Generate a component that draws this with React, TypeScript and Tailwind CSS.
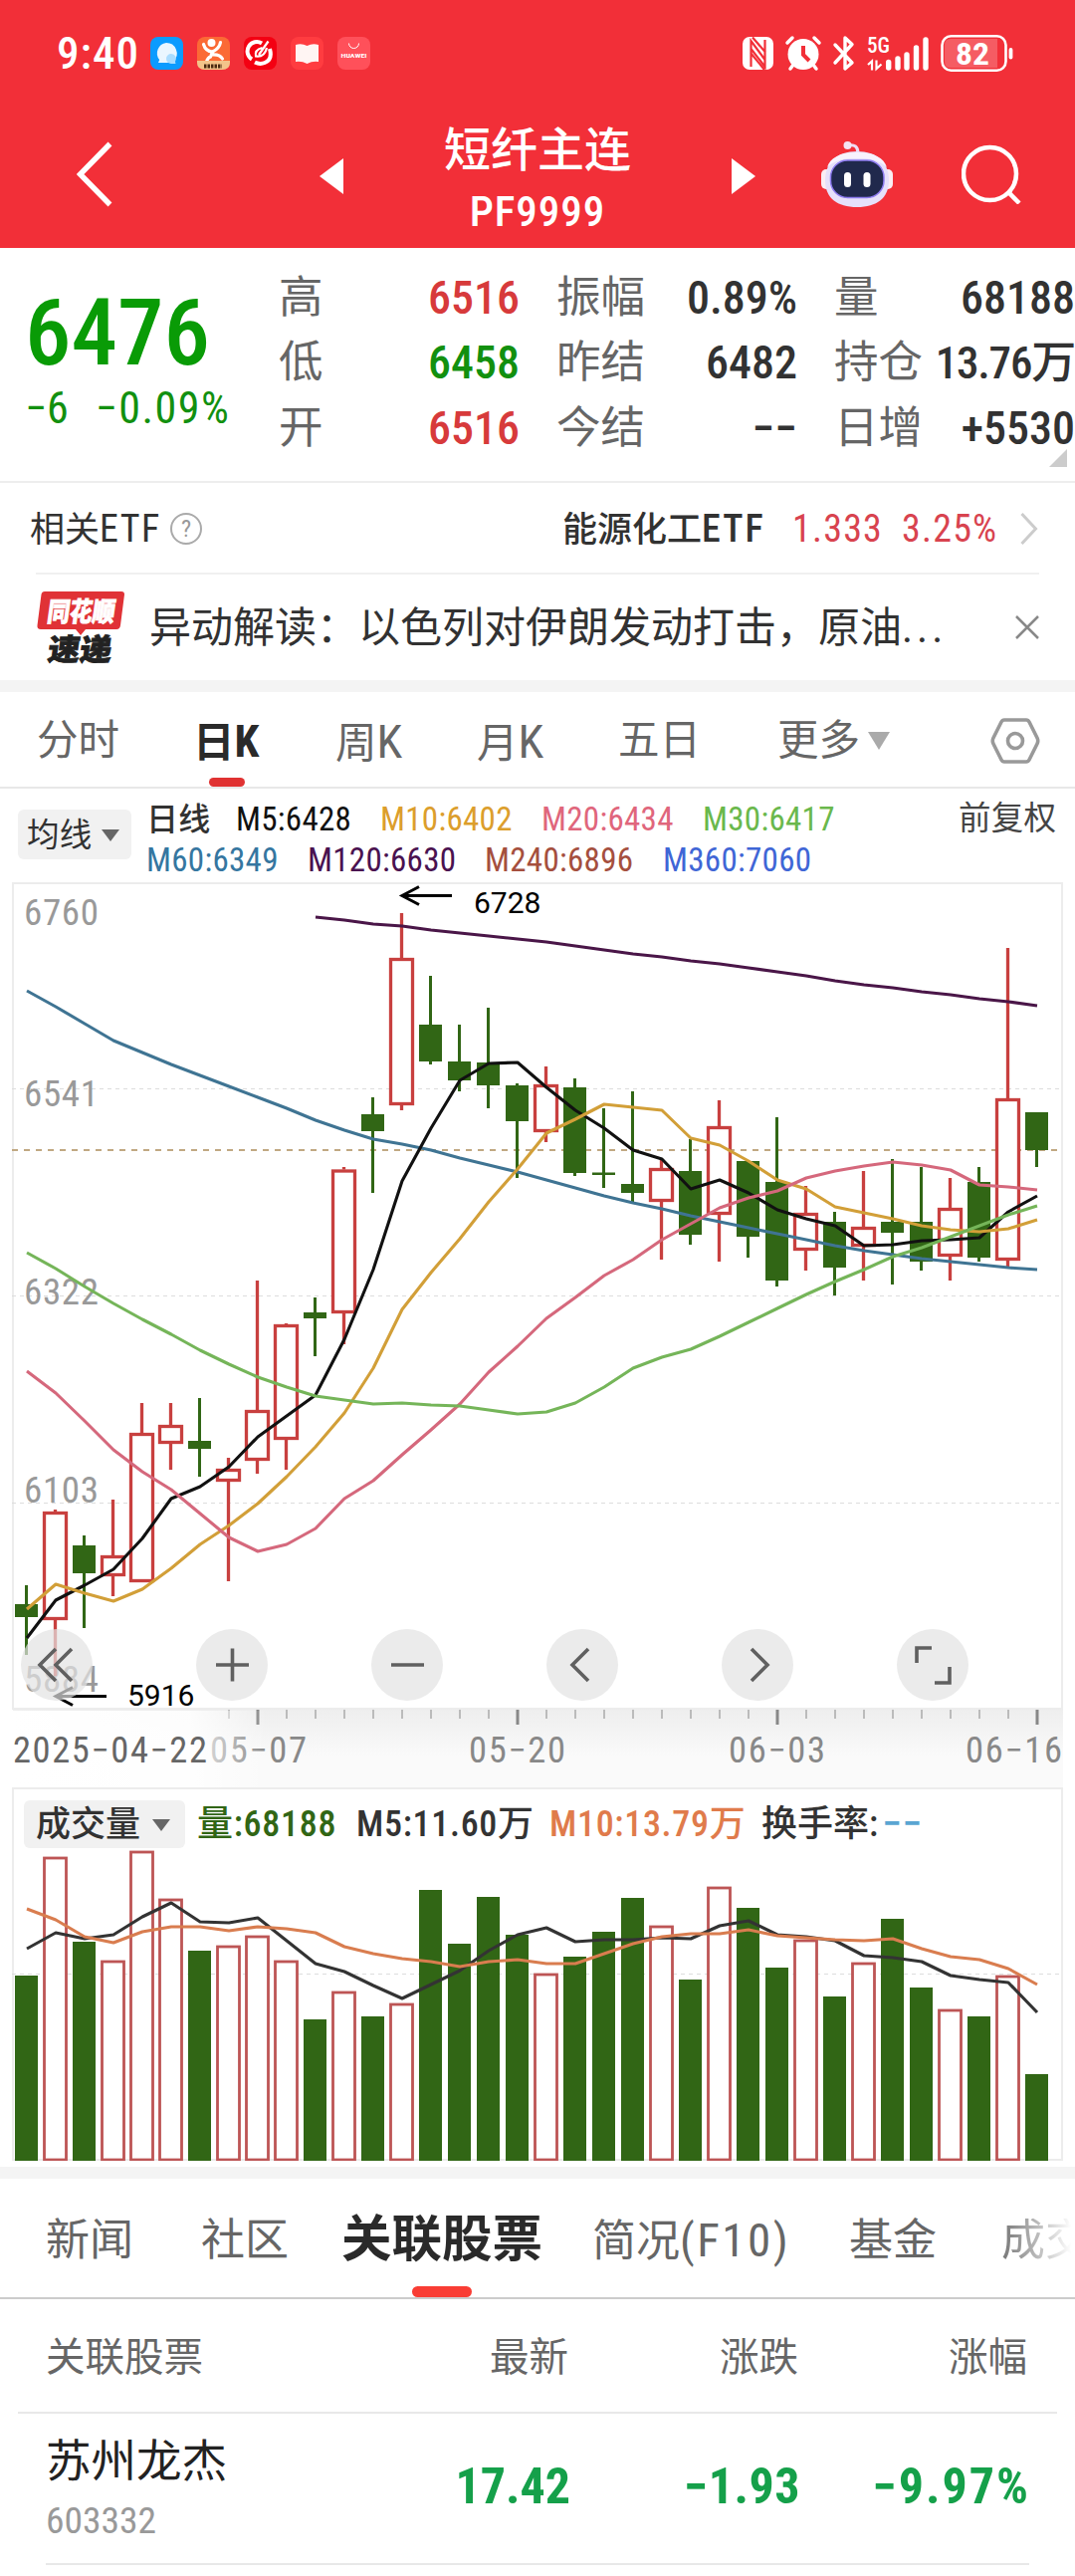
import clsx from 'clsx';
import { ReactNode } from 'react';

// [up, high, body top, body bottom, low]
const candles: [number, number, number, number, number][] = [
  [0, 1592, 1611, 1624, 1662], [1, 1516, 1518, 1627, 1683], [0, 1542, 1552, 1580, 1635], [1, 1506, 1562, 1583, 1603],
  [1, 1409, 1439, 1589, 1589], [1, 1409, 1431, 1450, 1476], [0, 1404, 1447, 1455, 1483], [1, 1464, 1475, 1488, 1588],
  [1, 1286, 1416, 1467, 1480], [1, 1329, 1330, 1446, 1476], [0, 1303, 1318, 1324, 1362], [1, 1172, 1174.5, 1319, 1350],
  [0, 1102, 1119, 1136, 1198], [1, 917, 962, 1110, 1115], [0, 980, 1029, 1066, 1069], [0, 1029, 1066, 1085, 1096],
  [0, 1012, 1067, 1090, 1113], [0, 1088, 1090, 1126, 1183], [1, 1071, 1089, 1137, 1147], [0, 1083, 1092, 1178, 1181],
  [0, 1113, 1177.5, 1180, 1193], [0, 1096, 1189, 1198, 1207], [1, 1164, 1173, 1207, 1265], [0, 1144, 1176, 1240, 1250],
  [1, 1105, 1131, 1220, 1267], [0, 1166, 1166, 1242, 1263], [0, 1122, 1187, 1286, 1292], [1, 1191, 1218, 1256, 1276],
  [0, 1217, 1227, 1273, 1301], [1, 1176, 1232, 1252, 1286], [0, 1164, 1227, 1238, 1290], [0, 1172, 1227, 1267, 1276],
  [1, 1183, 1213, 1262, 1286], [0, 1172, 1187, 1263, 1267], [1, 952, 1103, 1266, 1272], [0, 1117, 1117, 1155, 1172],
];

const averages = [
  { color: '#3f7493', start: 0, ys: [995, 1011, 1028, 1045, 1057, 1069, 1080, 1091, 1102, 1113, 1125, 1135, 1144, 1149, 1155, 1163, 1170, 1177, 1185, 1193, 1201, 1208, 1214, 1221, 1227, 1233, 1239, 1245, 1251, 1256, 1260, 1264, 1267, 1270, 1273, 1275] },
  { color: '#4a1648', start: 10, ys: [921, 924, 928, 930, 934, 937, 940, 943, 946, 950, 954, 958, 961, 965, 968, 972, 976, 980, 985, 989, 992, 996, 999, 1003, 1006, 1010] },
  { color: '#111111', start: 0, ys: [1645, 1607, 1592, 1576, 1545, 1505, 1493, 1473, 1443, 1422, 1401, 1345, 1275, 1186, 1133, 1085, 1068, 1067, 1092, 1115, 1133, 1155, 1164, 1194, 1185, 1198, 1215, 1224, 1231, 1251, 1250, 1246, 1245, 1243, 1217, 1201] },
  { color: '#d29f38', start: 0, ys: [1616, 1591, 1600, 1608, 1596, 1575, 1551, 1532, 1510, 1483, 1453, 1419, 1374, 1315, 1278, 1244, 1207, 1174, 1138, 1124, 1109, 1112, 1115, 1143, 1150, 1166, 1185, 1194, 1212, 1218, 1224, 1231, 1235, 1237, 1234, 1225] },
  { color: '#d5687c', start: 0, ys: [1377, 1399, 1427, 1456, 1478, 1496, 1520, 1544, 1558, 1551, 1535, 1505, 1487, 1461, 1436, 1410, 1378, 1352, 1324, 1303, 1281, 1265, 1245, 1229, 1213, 1203, 1196, 1183, 1176, 1171, 1167, 1170, 1175, 1190, 1192, 1195] },
  { color: '#75b559', start: 0, ys: [1258, 1274, 1292, 1309, 1325, 1340, 1356, 1370, 1383, 1393, 1402, 1406, 1410, 1409, 1411, 1412, 1416, 1420, 1418, 1409, 1393, 1374, 1363, 1355, 1342, 1328, 1314, 1300, 1287, 1275, 1262, 1253, 1242, 1231, 1220, 1211] },
];

const volumes = [
  1984, 1866, 1950, 1970, 1860, 1908, 1959, 1955, 1945, 1970, 2028, 2001, 2025, 2013, 1898, 1952, 1905, 1943,
  1983, 1965, 1940, 1906, 1935, 1988, 1896, 1916, 1976, 1949, 2005, 1972, 1927, 1996, 2019, 2025, 1985, 2083,
];

const volumeAverages = [
  { color: '#333333', start: 0, ys: [1957, 1941, 1947, 1943, 1925, 1911, 1930, 1931, 1926, 1949, 1972, 1980, 1994, 2007, 1993, 1979, 1959, 1943, 1936, 1950, 1948, 1948, 1946, 1947, 1934, 1929, 1943, 1945, 1949, 1964, 1966, 1970, 1984, 1988, 1991, 2021] },
  { color: '#d97d4f', start: 0, ys: [1917, 1928, 1945, 1951, 1940, 1935, 1935, 1939, 1935, 1937, 1941, 1955, 1962, 1967, 1970, 1975, 1970, 1968, 1972, 1972, 1962, 1952, 1945, 1942, 1942, 1938, 1944, 1946, 1948, 1949, 1947, 1957, 1965, 1968, 1977, 1993] },
];

const quotes = [
  [['高', '6516', 'text-[#d73a3b]'], ['低', '6458', 'text-[#12900f]'], ['开', '6516', 'text-[#d73a3b]']],
  [['振幅', '0.89%', 'text-[#323232]'], ['昨结', '6482', 'text-[#323232]'], ['今结', '−−', 'text-[#323232]']],
  [['量', '68188', 'text-[#323232]'], ['持仓', '13.76万', 'text-[#323232] text-[45px] tracking-[-1.2px]'], ['日增', '+5530', 'text-[#323232]']],
];

const px = (i: number) => 26.5 + i * 29;

function Lines({ series }: { series: { color: string; start: number; ys: number[] }[] }) {
  return (
    <>
      {series.map((s) => (
        <polyline
          key={s.color}
          points={s.ys.map((y, i) => `${px(i + s.start) + 0.5},${y}`).join(' ')}
          fill="none"
          stroke={s.color}
          strokeWidth="3.100"
          strokeLinejoin="round"
        />
      ))}
    </>
  );
}

function StatusBar() {
  return (
    <div className="flex h-[107px] items-center pl-[57px] text-white">
      <div className="w-[94px] text-[45px] leading-none font-medium tracking-[1px]">9:40</div>
      <div className="flex gap-[14px]">
        <svg className="size-[33px]" viewBox="0 0 33 33">
          <rect width="33" height="33" rx="8" fill="#0b9bff" />
          <path d="M16 6a10.5 10.5 0 0 1 7.500 18 10.500 10.500 0 0 1-7 2H8l1.200-3A10.500 10.500 0 0 1 16 6z" fill="#eaf6ff" />
          <path d="M21 17a5 5 0 0 1 4 8l.5 2H21a5 5 0 0 1 0-10z" fill="#a9dcff" />
        </svg>
        <svg className="size-[33px]" viewBox="0 0 33 33">
          <rect width="33" height="33" rx="8" fill="#fb6a35" />
          <circle cx="14.500" cy="6" r="4" fill="#fff" />
          <path d="M6.500 7.500q2 7 9 7.500M23.500 5.500q-1 6-8 9.500l-2 5q-3 1-4 5M14.500 18q8-1 11 4" stroke="#fff" strokeWidth="3.200" fill="none" strokeLinecap="round" />
          <path d="M0 24h33v2q0 7-8 7H8q-8 0-8-7z" fill="#f3c48a" />
          <path d="M7 29.500h18" stroke="#4a2a12" strokeWidth="4" strokeDasharray="2.500 1" />
        </svg>
        <svg className="size-[33px]" viewBox="0 0 33 33">
          <rect width="33" height="33" rx="8" fill="#f40012" />
          <path d="M18 6.500a8.500 8.500 0 0 0-10 16M26 12q3 11-5 14-5 2-10-.5" stroke="#fff" strokeWidth="4" fill="none" />
          <path d="M24.500 4.500 15 18M18.500 11q-8 2-6.500 8.500 9 1 11-8.500" stroke="#fff" strokeWidth="2.200" fill="none" />
        </svg>
        <svg className="size-[33px]" viewBox="0 0 33 33">
          <rect width="33" height="33" rx="8" fill="#ff3c40" />
          <path d="M5 8q6-2 11.500 1Q22 6 28 8v17q-6-1-11.500 2Q11 24 5 25z" fill="#fff5f3" />
        </svg>
        <svg className="size-[33px]" viewBox="0 0 33 33">
          <rect width="33" height="33" rx="8" fill="#ff505a" />
          <path d="M11.500 6.500a5 5 0 0 0 10 0" stroke="#fff" strokeWidth="1" fill="none" />
          <text x="16.500" y="21" textAnchor="middle" textLength="26" lengthAdjust="spacingAndGlyphs" fontSize="6" fontWeight="700" fill="#fff">HUAWEI</text>
        </svg>
      </div>
      <svg className="ml-[374px] h-[37px] w-[273px] overflow-visible" viewBox="746 35 273 37" fill="none" stroke="#fff">
        <rect x="746" y="37" width="31" height="33" rx="7" fill="#fff" stroke="none" />
        <path d="M754.500 67V41l14 19M768.500 40v27l-14-18M756 37.500l13 15M754 53l14 17" stroke="#f22f38" strokeWidth="2.200" />
        <circle cx="807" cy="54.500" r="15.500" fill="#fff" stroke="none" />
        <path d="M807 46v9l6 6" stroke="#f22f38" strokeWidth="4" />
        <path d="m791 43 5-5M823 43l-5-5M797 65l-3 4M817 65l3 4" strokeWidth="3.500" strokeLinecap="round" />
        <path d="m839 45 17 18-7 6V38l7 6.500L839 63" strokeWidth="3.400" strokeLinejoin="round" strokeLinecap="round" />
        <path d="M892.700 62.500v5.500M902 59v9M911 55v13M920.500 48v20M930 40v28" strokeWidth="5.400" strokeLinecap="round" />
        <path d="m872 65 4-3.500v9M880.500 60.500V69l5-4.500" strokeWidth="2.200" />
        <text x="871" y="53" textLength="23" lengthAdjust="spacingAndGlyphs" fontSize="22" fontWeight="500" fill="#fff" stroke="none">5G</text>
        <rect x="946.500" y="36.300" width="64" height="34.500" rx="9" strokeWidth="2.600" />
        <path d="M949 45q0-6 6-6h47v29h-47q-6 0-6-6z" fill="#fff" fillOpacity=".22" stroke="none" />
        <path d="M1015.500 50v7.500" strokeWidth="3.800" strokeLinecap="round" />
        <text x="960" y="64.500" textLength="34" lengthAdjust="spacingAndGlyphs" fontSize="32" fontWeight="700" fill="#fff" stroke="none">82</text>
      </svg>
    </div>
  );
}

function Header() {
  return (
    <header className="h-[249px] bg-[#f22f38]">
      <StatusBar />
      <div className="flex h-[136px] items-center pl-[77px] text-white">
        <svg className="h-[66px] w-9" viewBox="0 0 36 66">
          <path d="M33.500 2.500 3.500 33l30 30.500" fill="none" stroke="#fff" strokeWidth="5.500" />
        </svg>
        <svg className="mt-1 ml-[208px] h-9 w-6" viewBox="0 0 24 36"><path d="M24 0v36L0 18z" fill="#fff" /></svg>
        <div className="mx-[101px] flex w-[188px] flex-col items-center gap-[17px] pt-[10px] leading-none font-medium whitespace-nowrap">
          <div className="text-[47px]">短纤主连</div>
          <div className="text-[43px] tracking-[1px]">PF9999</div>
        </div>
        <svg className="mt-1 h-9 w-6" viewBox="0 0 24 36"><path d="M0 0v36l24-18z" fill="#fff" /></svg>
        <svg className="ml-[65px] h-[68px] w-[74px]" viewBox="824 140 74 68">
          <path d="M852 145q10-2 10 8" stroke="#eedcf4" strokeWidth="3" fill="none" />
          <circle cx="851.500" cy="145" r="4" fill="#f5e4f4" />
          <rect x="825" y="169" width="12" height="20" rx="5" fill="#fbeef4" />
          <rect x="885" y="169" width="12" height="20" rx="5" fill="#fbeef4" />
          <path d="M861 151c20 0 32 11 32 29s-12 27-32 27-32-9-32-27 12-29 32-29z" fill="#e6e0fa" />
          <path d="M861 152c18 0 27 6 30 15-9-8-17-9-30-9s-21 1-30 9c3-9 12-15 30-15z" fill="#f8f2fd" />
          <rect x="834.500" y="160" width="53.500" height="37.500" rx="17" fill="#20294c" stroke="#8e7cf0" strokeWidth="1.500" />
          <rect x="848" y="172" width="7" height="15" rx="3.500" fill="#fff" />
          <rect x="867.500" y="172" width="7" height="15" rx="3.500" fill="#fff" />
        </svg>
        <svg className="ml-[68px] size-[60px]" viewBox="0 0 60 60" fill="none" stroke="#fff" strokeWidth="4.500">
          <circle cx="28.500" cy="29.500" r="26.500" />
          <path d="m47 48 11 11" />
        </svg>
      </div>
    </header>
  );
}

function Quote() {
  return (
    <section className="relative flex h-[236px] border-b-2 border-[#ededed] leading-none font-medium whitespace-nowrap">
      <div className="w-[281px] pl-[25px] text-[#099b06]">
        <div className="mt-[39px] text-[93px]">6476</div>
        <div className="mt-[7px] flex gap-[27px] text-[44px] font-[450] text-[#12900f]">
          <span>−6</span>
          <span className="tracking-[1.500px]">−0.09%</span>
        </div>
      </div>
      <div className="flex gap-[37px] pt-[17px]">
        {quotes.map((col, i) => (
          <div key={i} className="w-[242px]">
            {col.map(([label, value, color]) => (
              <div key={label} className="flex h-[65.5px] items-center justify-between">
                <span className="text-[44.5px] font-normal text-[#666]">{label}</span>
                <span className={clsx(label !== '持仓' && 'text-[46px]', color)}>{value}</span>
              </div>
            ))}
          </div>
        ))}
      </div>
      <svg className="absolute top-[202px] left-[1054px] size-[18px]" viewBox="0 0 18 18"><path d="M18 0v18H0z" fill="#ccc" /></svg>
    </section>
  );
}

function EtfRow() {
  return (
    <div className="flex h-[90px] items-center pt-0.5 pl-[30px] text-[35px] leading-none whitespace-nowrap text-[#323232]">
      <div className="w-[141px]">相关<span className="text-[38px] tracking-[1.500px]">ETF</span></div>
      <div className="flex size-8 items-center justify-center rounded-full border-2 border-[#aaa] text-[24px] text-[#999]">?</div>
      <div className="ml-[362px] w-[231px] font-medium">能源化工<span className="text-[38px] tracking-[2px]">ETF</span></div>
      <div className="w-[110px] text-[38px] tracking-[1.200px] text-[#d8434f]">1.333</div>
      <div className="w-[119px] text-[38px] tracking-[1.200px] text-[#d8434f]">3.25%</div>
      <svg className="h-8 w-[18px]" viewBox="0 0 18 32"><path d="m1.500 1 14 15-14 15" fill="none" stroke="#ccc" strokeWidth="3" /></svg>
    </div>
  );
}

function NewsRow() {
  return (
    <div className="mx-9 flex h-[108px] items-center border-t-2 border-[#f0f0f0] leading-none whitespace-nowrap">
      <svg className="h-[74px] w-[90px] shrink-0 overflow-visible" viewBox="36 592 90 74">
        <path d="M45 593h77q3 0 3 3l-4 31q-.5 4-4 4H86l-5 6-5-6H41q-4 0-3.500-4l4-31q.5-3 3.500-3z" fill="#e03236" />
        <g transform="skewX(-8)" fontWeight="900" strokeWidth=".8">
          <text x="134" y="623" fontSize="27" textLength="68" lengthAdjust="spacingAndGlyphs" fill="#fff" stroke="#fff">同花顺</text>
          <text x="140" y="662" fontSize="30" textLength="64" lengthAdjust="spacingAndGlyphs" fill="#222" stroke="#222">速递</text>
        </g>
      </svg>
      <div className="ml-[24px] w-[870px] pt-0.5 text-[42px] text-[#323232]">
        异动解读：以色列对伊朗发动打击，原油<span className="tracking-[4px]">...</span>
      </div>
      <svg className="size-6 shrink-0" viewBox="0 0 24 24"><path d="m1 1 22 22M23 1 1 23" stroke="#888" strokeWidth="2.500" /></svg>
    </div>
  );
}

function PeriodTabs() {
  return (
    <nav className="relative flex h-[97px] items-center border-b-2 border-[#e8e8e8] pt-[3px] pl-[37px] text-[41.5px] leading-none whitespace-nowrap text-[#666]">
      <span className="w-[157px]">分时</span>
      <span className="w-[143px] font-bold text-[#2a2a2a]">日<span className="text-[45px]">K</span></span>
      <span className="w-[142px]">周<span className="text-[47px]">K</span></span>
      <span className="w-[142px]">月<span className="text-[47px]">K</span></span>
      <span className="w-[160px]">五日</span>
      <span className="w-[91px]">更多</span>
      <svg className="h-[18px] w-[22px]" viewBox="0 0 22 18"><path d="M0 0h22L11 18z" fill="#aaa" /></svg>
      <svg className="ml-[101px] h-12 w-[50px]" viewBox="0 0 50 48" fill="none" stroke="#999" strokeWidth="3.600">
        <path d="M14 3h22q2 0 3 2l8 16q1.500 3 0 6l-8 16q-1 2-3 2H14q-2 0-3-2L3 27q-1.500-3 0-6l8-16q1-2 3-2z" />
        <circle cx="25" cy="24" r="7.500" />
      </svg>
      <i className="absolute bottom-0 left-[210px] h-[9px] w-9 rounded-full bg-[#e03232]" />
    </nav>
  );
}

function Picker({ children, className }: { children: ReactNode; className: string }) {
  return (
    <div className={clsx('flex items-center rounded-md bg-[#f1f1f1] text-[#323232]', className)}>
      {children}
      <svg className="h-3 w-[18px]" viewBox="0 0 18 12"><path d="M0 0h18L9 12z" fill="#666" /></svg>
    </div>
  );
}

function AverageLegend() {
  return (
    <div className="flex h-[94px] pl-[18px] text-[33px] leading-none font-[450] tracking-[.3px] whitespace-nowrap">
      <Picker className="mt-[21px] h-[50px] w-[114px] justify-between pr-3 pl-[9px] pt-0.5 text-[32.500px] font-normal">均线</Picker>
      <div className="ml-[15px]">
        <div className="mt-[10px] flex h-[41px] items-center">
          <span className="w-[90px] text-[32px] text-[#323232]">日线</span>
          <span className="w-[145px] text-[#111]">M5:6428</span>
          <span className="w-[162px] text-[#dc9e2c]">M10:6402</span>
          <span className="w-[162px] text-[#e0667c]">M20:6434</span>
          <span className="w-[257px] text-[#6ab84c]">M30:6417</span>
          <span className="text-[32.500px] font-normal text-[#444]">前复权</span>
        </div>
        <div className="flex h-[41px] items-center">
          <span className="w-[162px] text-[#3576a0]">M60:6349</span>
          <span className="w-[178px] text-[#4a1250]">M120:6630</span>
          <span className="w-[179px] text-[#a54f3e]">M240:6896</span>
          <span className="text-[#3f66d6]">M360:7060</span>
        </div>
      </div>
    </div>
  );
}

function PriceChart() {
  return (
    <div className="relative h-[909px]">
      <svg className="block h-[909px] w-[1080px]" viewBox="0 886 1080 909">
        <defs>
          <linearGradient id="strip" x1="0" y1="0" x2="0" y2="1">
            <stop offset="0" stopColor="#eee" />
            <stop offset=".6" stopColor="#fafafa" />
            <stop offset="1" stopColor="#fafafa" />
          </linearGradient>
          <linearGradient id="fade" x1="0" y1="0" x2="1" y2="0">
            <stop offset="0" stopColor="#fff" />
            <stop offset=".7" stopColor="#fff" stopOpacity=".85" />
            <stop offset="1" stopColor="#fff" stopOpacity="0" />
          </linearGradient>
        </defs>
        <rect x="13" y="1717" width="1055" height="78" fill="url(#strip)" />
        <rect x="13" y="887" width="1054" height="829" fill="#fff" stroke="#ececec" strokeWidth="2" />
        <path d="M12 1093.500h1055M12 1301.500h1055M12 1509.500h1055" stroke="#ddd" strokeDasharray="4 4" />
        <path d="M12 1155h1055" stroke="#c0a882" strokeWidth="2" strokeDasharray="6 6" />
        <g fontSize="37" fill="#999" fontWeight="450">
          <text x="24" y="929" textLength="75">6760</text>
          <text x="24" y="1111" textLength="75">6541</text>
          <text x="24" y="1310" textLength="75">6322</text>
          <text x="24" y="1509" textLength="75">6103</text>
          <text x="24" y="1699" textLength="75">5884</text>
        </g>
        {candles.map(([up, high, top, bottom, low], i) =>
          up ? (
            <g key={i} stroke="#c8403f" strokeWidth="3.300">
              <path d={`M${px(i)} ${high}V${top}M${px(i)} ${bottom}V${low}`} />
              <rect x={px(i) - 11} y={top + 1.5} width="22" height={bottom - top - 3} fill="#fff" />
            </g>
          ) : (
            <g key={i} fill="#316615">
              <path d={`M${px(i)} ${high}V${low}`} stroke="#316615" strokeWidth="3" />
              <rect x={px(i) - 11.5} y={top} width="23" height={bottom - top} />
            </g>
          )
        )}
        <Lines series={averages} />
        <g fill="none" stroke="#000" strokeWidth="3">
          <path d="M454 899.500h-50M421 890.500l-17 9 17 9" />
          <path d="M107 1703.500H56M73 1694.500l-17 9 17 9" />
        </g>
        <g fontSize="30" className="font-stretch-normal">
          <text x="476" y="917">6728</text>
          <text x="128" y="1712.500">5916</text>
        </g>
        {candles.map((_, i) => {
          if (i < 7) return null;
          const major = (i + 1) % 9 === 0;
          return <path key={i} d={`M${px(i) + 0.5} 1717v${major ? 15 : 9}`} stroke={major ? '#888' : '#bbb'} strokeWidth={major ? 3 : 2} />;
        })}
        <g fontSize="36.500" fill="#888" fontWeight="450">
          <text x="211" y="1770" textLength="97">05−07</text>
          <text x="471" y="1770" textLength="97">05−20</text>
          <text x="732" y="1770" textLength="97">06−03</text>
          <text x="970" y="1770" textLength="97">06−16</text>
          <rect x="12" y="1718" width="256" height="77" fill="url(#fade)" />
          <text x="13" y="1770" textLength="195" fill="#666">2025−04−22</text>
        </g>
      </svg>
      <div className="absolute top-[750px] left-[21px] flex gap-[104px]">
        {[
          'M35 20 19 36l16 16M51 20 35 36l16 16',
          'M20 36h33M36.500 19.500v33',
          'M20 36h33',
          'M42 20 26 36l16 16',
          'M30 20l16 16-16 16',
          'M35 19H20v15M38 54h15V38',
        ].map((d) => (
          <div key={d} className="size-[72px] rounded-full bg-[#e3e3e3]/70">
            <svg viewBox="0 0 72 72" fill="none" stroke="#606060" strokeWidth="3.600">
              <path d={d} />
            </svg>
          </div>
        ))}
      </div>
    </div>
  );
}

function VolumeChart() {
  return (
    <div className="mx-3 h-[375px] w-[1056px] border-2 border-[#ececec] text-[36px] leading-none font-medium tracking-[.7px] whitespace-nowrap">
      <div className="flex h-[60px] items-center pt-[9px] pl-[10px]">
        <Picker className="h-12 w-[162px] justify-between pr-[15px] pl-[12px] pt-0.5 text-[35px] tracking-normal">成交量</Picker>
        <span className="ml-[12px] w-[160px] text-[#316615]">量:68188</span>
        <span className="w-[194px] text-[#333]">M5:11.60万</span>
        <span className="w-[213px] text-[#e07b4b]">M10:13.79万</span>
        <span className="tracking-normal text-[#333]">换手率:</span>
        <span className="ml-1 text-[40px] text-[#5aa5d2]">−−</span>
      </div>
      <svg className="-ml-0.5 block h-[313px] w-[1056px]" viewBox="12 1857 1056 313">
        <path d="M12 1982.500h1056" stroke="#ddd" strokeDasharray="4 4" />
        {volumes.map((top, i) =>
          candles[i][0] ? (
            <rect key={i} x={px(i) - 11} y={top} width="22" height={2169 - top} fill="#fff" stroke="#bd5555" strokeWidth="2.800" />
          ) : (
            <rect key={i} x={px(i) - 11.5} y={top} width="23" height={2170 - top} fill="#316615" />
          )
        )}
        <Lines series={volumeAverages} />
      </svg>
    </div>
  );
}

function InfoTabs() {
  return (
    <nav className="relative flex h-[121px] items-center overflow-hidden border-b-2 border-[#ccc] pt-1 pl-[46px] text-[44px] leading-none whitespace-nowrap text-[#666] *:shrink-0">
      <span className="w-[156px]">新闻</span>
      <span className="w-[141px]">社区</span>
      <span className="w-[252px] text-[50.500px] font-bold text-[#2a2a2a]">关联股票</span>
      <span className="w-[258px]">简况<span className="text-[47px] tracking-[2.500px]">(F10)</span></span>
      <span className="w-[153px]">基金</span>
      <span className="bg-linear-to-r from-[#777] to-white to-80% bg-clip-text text-transparent">成交</span>
      <i className="absolute bottom-0 left-[414px] h-[11px] w-[60px] rounded-full bg-[#f93d34]" />
    </nav>
  );
}

function StockTable() {
  return (
    <div className="leading-none whitespace-nowrap">
      <div className="mx-[18px] flex h-[115px] items-center border-b-2 border-[#e8e8e8] pt-1 pr-[30px] pl-[28px] text-[39.500px] text-[#666]">
        <span className="grow">关联股票</span>
        <span className="w-[200px] text-right">最新</span>
        <span className="w-[231px] text-right">涨跌</span>
        <span className="w-[230px] text-right">涨幅</span>
      </div>
      <div className="mx-[46px] flex h-[152px] items-center border-b-2 border-[#e8e8e8] text-[50px] font-bold text-[#15a04a]">
        <div className="grow pt-0.5 font-normal">
          <div className="text-[45.500px] text-[#222]">苏州龙杰</div>
          <div className="mt-[17px] text-[37.500px] text-[#999]">603332</div>
        </div>
        <span className="mt-[-4px] w-[200px] text-right">17.42</span>
        <span className="mt-[-4px] w-[231px] text-right tracking-[.5px]">−1.93</span>
        <span className="mt-[-4px] mr-[-1px] w-[231px] text-right tracking-[2px]">−9.97%</span>
      </div>
    </div>
  );
}

export default function App() {
  return (
    <div className="h-[2587px] w-[1080px] overflow-hidden bg-white font-['Roboto','Noto_Sans_CJK_SC',sans-serif] font-stretch-condensed">
      <Header />
      <Quote />
      <EtfRow />
      <NewsRow />
      <div className="h-3 bg-[#f4f4f4]" />
      <PeriodTabs />
      <AverageLegend />
      <PriceChart />
      <VolumeChart />
      <div className="mt-[6px] h-3 bg-[#f4f4f4]" />
      <InfoTabs />
      <StockTable />
    </div>
  );
}
